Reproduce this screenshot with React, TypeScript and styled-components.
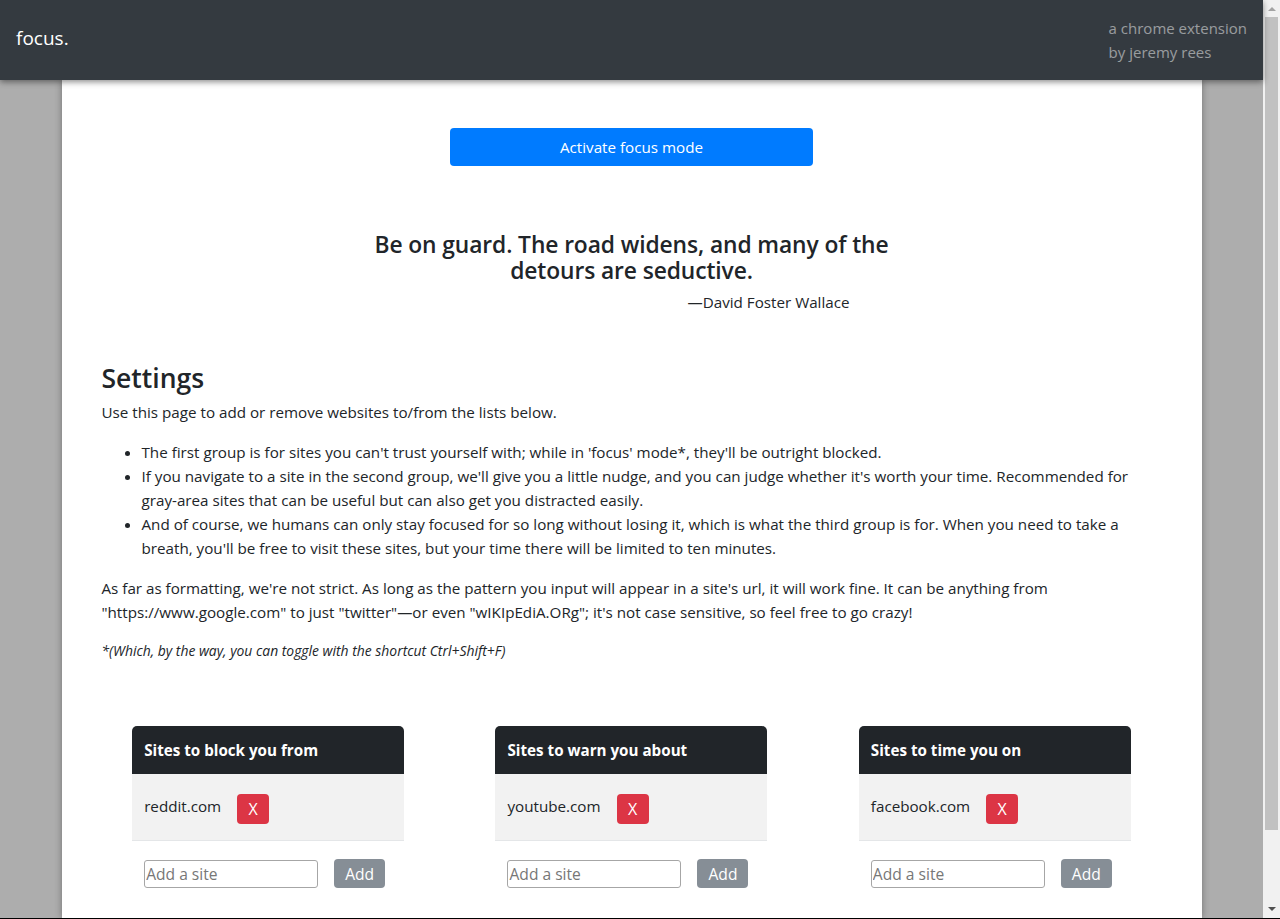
import React from "react";
import styled, { createGlobalStyle } from "styled-components";

const GlobalStyle = createGlobalStyle`
  html, body { margin: 0; padding: 0; }
  body {
    font-family: "Open Sans", "Noto Sans", sans-serif;
    font-size: 15.2px;
    line-height: 24px;
    color: #212529;
    background: #adadad;
    overflow: hidden;
  }
  * { box-sizing: border-box; }
`;

const Frame = styled.div`
  display: flex;
  height: 919px;
  border-bottom: 1px solid #000;
  overflow: hidden;
`;

const Main = styled.div`
  flex: 1;
  display: flex;
  flex-direction: column;
  min-width: 0;
  background: #adadad;
`;

const Navbar = styled.header`
  position: relative;
  z-index: 2;
  height: 80px;
  flex: none;
  display: flex;
  align-items: center;
  justify-content: space-between;
  padding: 0 16px;
  background: #343a40;
  box-shadow: 0 2px 6px rgba(0, 0, 0, 0.45);
`;

const Brand = styled.div`
  color: #fff;
  font-size: 19px;
  font-weight: 500;
  line-height: 28px;
  margin-top: -4px;
`;

const Credit = styled.div`
  color: rgba(255, 255, 255, 0.5);
  font-size: 15px;
  line-height: 24px;
`;

const Stage = styled.main`
  flex: 1;
  display: flex;
  justify-content: center;
  min-height: 0;
`;

const Container = styled.div`
  width: 1140px;
  flex: none;
  background: #fff;
  box-shadow: 0 0 7px rgba(0, 0, 0, 0.35);
  padding: 48px 40px 0;
  display: flex;
  flex-direction: column;
`;

const PrimaryButton = styled.button`
  align-self: center;
  width: 363px;
  height: 38px;
  border: none;
  border-radius: 4px;
  background: #007bff;
  color: #fff;
  font-family: inherit;
  font-size: 15.2px;
  line-height: 24px;
  cursor: pointer;
`;

const Quote = styled.figure`
  align-self: center;
  width: 540px;
  margin: 66px 0 0;
  display: flex;
  flex-direction: column;
`;

const QuoteText = styled.blockquote`
  margin: 0;
  text-align: center;
  font-size: 22.8px;
  font-weight: 600;
  line-height: 26px;
  letter-spacing: -0.1px;
`;

const Attribution = styled.figcaption`
  margin-top: 6px;
  text-align: right;
  padding-right: 52px;
  font-size: 15.2px;
  line-height: 24px;
`;

const Heading = styled.h2`
  margin: 47px 0 5px;
  font-size: 26.5px;
  font-weight: 600;
  line-height: 34px;
`;

const Para = styled.p`
  margin: 0 0 16px;
`;

const List = styled.ul`
  margin: 0 0 16px;
  padding-left: 40px;
`;

const Note = styled.p`
  margin: 0;
  font-size: 13.9px;
  line-height: 21px;
  font-style: italic;
`;

const CardGrid = styled.section`
  margin: 65px -15px 0;
  display: grid;
  grid-template-columns: repeat(3, 1fr);
  justify-items: center;
`;

const Card = styled.div`
  width: 272px;
  display: flex;
  flex-direction: column;
`;

const CardHeader = styled.div`
  height: 48px;
  display: flex;
  align-items: center;
  padding: 0 12px;
  background: #212529;
  color: #fff;
  font-weight: 700;
  border-radius: 5px 5px 0 0;
`;

const SiteRow = styled.div`
  height: 67px;
  display: flex;
  align-items: center;
  gap: 16px;
  padding: 0 12px;
  background: #f2f2f2;
  border-bottom: 1px solid #e4e6e8;
`;

const SiteName = styled.span`
  margin-top: -3px;
`;

const RemoveButton = styled.button`
  width: 32px;
  height: 30px;
  border: none;
  border-radius: 4px;
  background: #dc3545;
  color: #fff;
  font-family: inherit;
  font-size: 16px;
  line-height: 24px;
  padding: 0;
  margin-top: 3px;
`;

const AddRow = styled.div`
  display: flex;
  align-items: center;
  gap: 16px;
  padding: 18px 12px 0;
`;

const SiteInput = styled.input`
  width: 174px;
  height: 28px;
  border: 1px solid #a6a6a6;
  border-radius: 3px;
  padding: 0 1px;
  font-family: inherit;
  font-size: 15.6px;
  color: #212529;
  &::placeholder {
    color: #777;
  }
`;

const AddButton = styled.button`
  width: 51px;
  height: 29px;
  border: none;
  border-radius: 4px;
  background: #868e96;
  color: #fff;
  font-family: inherit;
  font-size: 15.6px;
  line-height: 24px;
  padding: 0;
`;

const Scrollbar = styled.div`
  width: 17px;
  flex: none;
  display: flex;
  flex-direction: column;
  background: #f1f1f1;
`;

const ArrowBox = styled.div`
  height: 17px;
  flex: none;
  display: flex;
  align-items: center;
  justify-content: center;
`;

const Track = styled.div`
  flex: 1;
  padding: 0 2px 71px;
  display: flex;
`;

const Thumb = styled.div`
  flex: 1;
  background: #c1c1c1;
`;

const Arrow = ({ up, color }: { up?: boolean; color: string }) => (
  <svg width="8" height="5" viewBox="0 0 8 5">
    <path d={up ? "M0 5 L4 1 L8 5 Z" : "M0 0 L8 0 L4 4 Z"} fill={color} />
  </svg>
);

const lists = [
  { title: "Sites to block you from", site: "reddit.com" },
  { title: "Sites to warn you about", site: "youtube.com" },
  { title: "Sites to time you on", site: "facebook.com" },
];

export default function App() {
  return (
    <Frame>
      <GlobalStyle />
      <Main>
        <Navbar>
          <Brand>focus.</Brand>
          <Credit>
            a chrome extension
            <br />
            by jeremy rees
          </Credit>
        </Navbar>
        <Stage>
          <Container>
            <PrimaryButton>Activate focus mode</PrimaryButton>
            <Quote>
              <QuoteText>Be on guard. The road widens, and many of the detours are seductive.</QuoteText>
              <Attribution>—David Foster Wallace</Attribution>
            </Quote>
            <Heading>Settings</Heading>
            <Para>Use this page to add or remove websites to/from the lists below.</Para>
            <List>
              <li>The first group is for sites you can't trust yourself with; while in 'focus' mode*, they'll be outright blocked.</li>
              <li>
                If you navigate to a site in the second group, we'll give you a little nudge, and you can judge whether it's worth your
                time. Recommended for gray-area sites that can be useful but can also get you distracted easily.
              </li>
              <li>
                And of course, we humans can only stay focused for so long without losing it, which is what the third group is for. When
                you need to take a breath, you'll be free to visit these sites, but your time there will be limited to ten minutes.
              </li>
            </List>
            <Para>
              As far as formatting, we're not strict. As long as the pattern you input will appear in a site's url, it will work fine.
              It can be anything from "https://www.google.com" to just "twitter"—or even "wIKIpEdiA.ORg"; it's not case sensitive, so
              feel free to go crazy!
            </Para>
            <Note>*(Which, by the way, you can toggle with the shortcut Ctrl+Shift+F)</Note>
            <CardGrid>
              {lists.map((l) => (
                <Card key={l.title}>
                  <CardHeader>{l.title}</CardHeader>
                  <SiteRow>
                    <SiteName>{l.site}</SiteName>
                    <RemoveButton>X</RemoveButton>
                  </SiteRow>
                  <AddRow>
                    <SiteInput placeholder="Add a site" />
                    <AddButton>Add</AddButton>
                  </AddRow>
                </Card>
              ))}
            </CardGrid>
          </Container>
        </Stage>
      </Main>
      <Scrollbar>
        <ArrowBox>
          <Arrow up color="#a3a3a3" />
        </ArrowBox>
        <Track>
          <Thumb />
        </Track>
        <ArrowBox>
          <Arrow color="#505050" />
        </ArrowBox>
      </Scrollbar>
    </Frame>
  );
}
